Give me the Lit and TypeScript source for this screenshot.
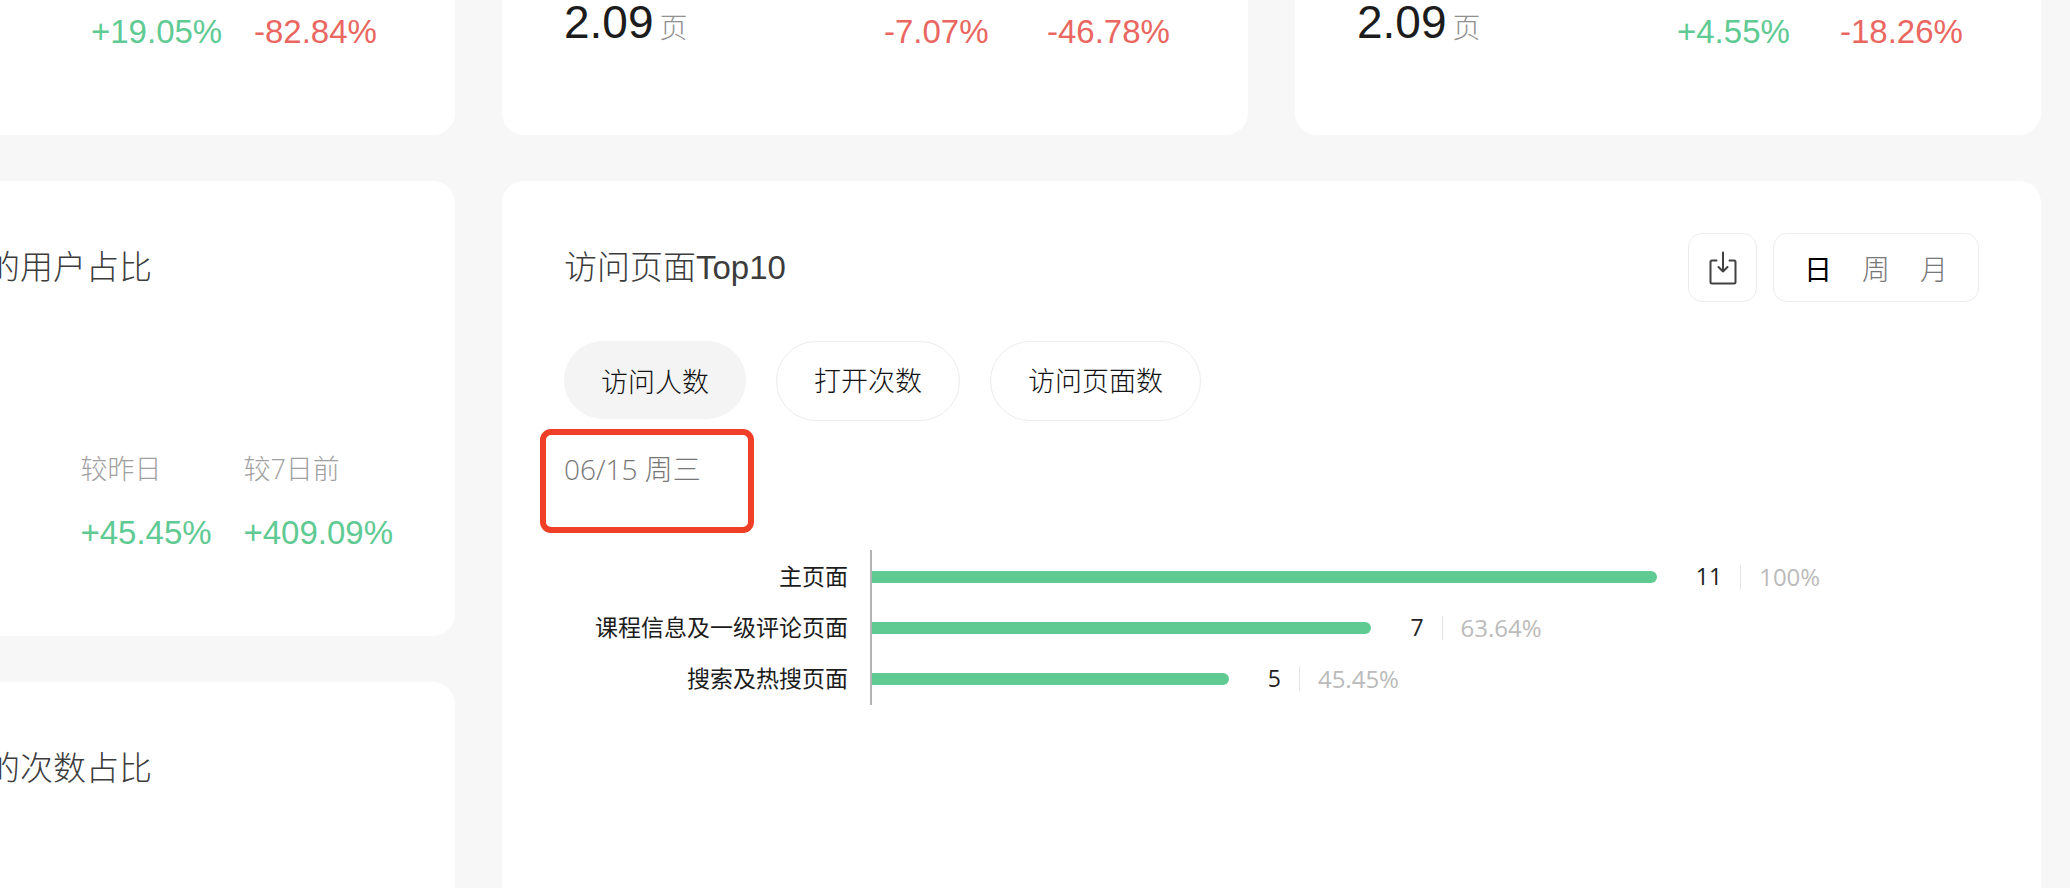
import { LitElement, html, css } from "lit";
import { customElement, property, state } from "lit/decorators.js";
import { classMap } from "lit/directives/class-map.js";

interface PageVisit {
  name: string;
  count: number;
  share: string;
}

const VISITS: PageVisit[] = [
  { name: "主页面", count: 11, share: "100%" },
  { name: "课程信息及一级评论页面", count: 7, share: "63.64%" },
  { name: "搜索及热搜页面", count: 5, share: "45.45%" },
];

/** Percentage of the plot width taken by the longest bar. */
const LONGEST_BAR = 70.9;

/** The two period-over-period rates shown at the right of a metric card. */
@customElement("rate-pair")
export class RatePair extends LitElement {
  @property() day = "";
  @property() week = "";
  @property({ type: Boolean }) labelled = false;

  static styles = css`
    :host {
      display: grid;
      grid-template-columns: 131px minmax(139px, auto);
      column-gap: 32px;
      row-gap: 24px;
      line-height: 40px;
      white-space: nowrap;
    }
    .label {
      font-size: 27px;
      font-weight: 300;
      color: #a0a0a0;
    }
    .rate {
      font-family: "Liberation Sans", Arial, sans-serif;
      font-size: 33px;
    }
    .up {
      color: #60ca93;
    }
    .down {
      color: #ea6660;
    }
  `;

  private rate(value: string) {
    const up = value.startsWith("+");
    return html`<span class=${classMap({ rate: true, up, down: !up })}>${value}</span>`;
  }

  render() {
    return html`
      ${this.labelled
        ? html`<span class="label">较昨日</span><span class="label">较7日前</span>`
        : null}
      ${this.rate(this.day)} ${this.rate(this.week)}
    `;
  }
}

/** Horizontal bar chart of the most visited pages. */
@customElement("visit-chart")
export class VisitChart extends LitElement {
  @property({ attribute: false }) visits: PageVisit[] = [];

  static styles = css`
    :host {
      display: grid;
      grid-template-columns: 284px 1fr;
      column-gap: 22px;
      font-size: 23px;
      line-height: 51px;
      white-space: nowrap;
    }
    .names,
    .plot {
      list-style: none;
      margin: 0;
      padding: 1px 0;
    }
    .names {
      text-align: right;
      color: #1c1c1c;
    }
    .plot {
      border-left: 2px solid #b4b4b4;
    }
    .row {
      display: flex;
      align-items: center;
      height: 51px;
    }
    .bar {
      height: 12px;
      border-radius: 0 6px 6px 0;
      background: #5fcb92;
    }
    .count {
      margin-left: 39px;
      color: #222;
    }
    .divider {
      width: 1px;
      height: 24px;
      margin: 0 18px;
      background: #e4e4e4;
    }
    .share {
      font-size: 24px;
      color: #bbb;
    }
  `;

  render() {
    const max = Math.max(...this.visits.map((v) => v.count));
    return html`
      <ul class="names">
        ${this.visits.map((v) => html`<li>${v.name}</li>`)}
      </ul>
      <ul class="plot">
        ${this.visits.map(
          (v) => html`<li class="row">
            <span class="bar" style="width:${(v.count / max) * LONGEST_BAR}%"></span>
            <span class="count">${v.count}</span>
            <span class="divider"></span>
            <span class="share">${v.share}</span>
          </li>`,
        )}
      </ul>
    `;
  }
}

@customElement("app-root")
export class AppRoot extends LitElement {
  @state() private metric = "访问人数";
  @state() private period = "日";

  static styles = css`
    :host {
      display: block;
      height: 100vh;
      overflow: hidden;
      background: #f7f7f7;
      font-family: "Open Sans", "Noto Sans CJK SC", sans-serif;
    }
    .page {
      display: grid;
      grid-template-columns: 455px 1fr 1fr;
      grid-template-rows: auto auto 1fr;
      gap: 46px 47px;
      height: 100%;
      padding-right: 29px;
      box-sizing: border-box;
    }
    .card {
      background: #fff;
      border-radius: 22px;
      padding: 52px 62px 83px;
      box-sizing: border-box;
      min-width: 0;
    }
    .top {
      display: flex;
      justify-content: space-between;
      align-items: flex-end;
      border-top-left-radius: 0;
      border-top-right-radius: 0;
      padding-top: 0;
    }
    .top rate-pair {
      padding-top: 12px;
    }
    .side {
      display: flex;
      flex-direction: column;
      overflow: hidden;
      border-top-left-radius: 0;
      border-bottom-left-radius: 0;
    }
    .side rate-pair {
      margin-top: 147px;
      align-self: flex-end;
    }
    .first {
      justify-content: flex-end;
      border-bottom-left-radius: 0;
    }
    .open {
      border-bottom-left-radius: 0;
      border-bottom-right-radius: 0;
      padding-bottom: 0;
    }
    .total {
      display: flex;
      align-items: baseline;
      align-self: flex-start;
      gap: 6px;
      font-family: "Liberation Sans", "Noto Sans CJK SC", sans-serif;
      font-size: 46px;
      line-height: 44px;
      color: #1c1c1c;
    }
    .unit {
      font-size: 28px;
      font-weight: 300;
      line-height: 28px;
      color: #909090;
    }
    .title {
      margin: 0;
      font-family: "Liberation Sans", "Noto Sans CJK SC", sans-serif;
      font-size: 33px;
      line-height: 69px;
      font-weight: 300;
      color: #3c3c3c;
      white-space: nowrap;
    }
    .side .title {
      margin-left: -75px;
    }
    .ranking {
      grid-column: 2 / 4;
      grid-row: 2 / 4;
    }
    .head {
      display: flex;
      gap: 16px;
    }
    .head .title {
      flex: 1;
    }
    button {
      font: inherit;
      color: inherit;
      background: none;
      border: 0;
      padding: 0;
      cursor: pointer;
    }
    .download,
    .periods {
      box-sizing: border-box;
      height: 69px;
      border: 1px solid #ededed;
      border-radius: 14px;
    }
    .download {
      display: grid;
      place-items: center;
      width: 69px;
    }
    .periods {
      display: flex;
      padding: 0 15px;
      font-size: 28px;
      font-weight: 300;
      color: #777;
    }
    .period {
      width: 58px;
    }
    .period.on {
      color: #000;
      font-weight: 400;
    }
    .tabs {
      display: flex;
      align-items: flex-start;
      gap: 30px;
      margin-top: 39px;
    }
    .tab {
      box-sizing: border-box;
      height: 80px;
      padding: 0 37px 3px;
      border: 1px solid #ececec;
      border-radius: 40px;
      font-size: 27px;
      font-weight: 300;
      color: #111;
    }
    .tab.on {
      height: 78px;
      padding-bottom: 0;
      border: 0;
      background: #f4f4f4;
    }
    .date {
      position: relative;
      width: max-content;
      margin: 28px 0 61px;
      font-size: 28px;
      line-height: 40px;
      font-weight: 300;
      color: #777;
    }
    .mark {
      position: absolute;
      left: -24px;
      top: -20px;
      width: 214px;
      height: 104px;
      box-sizing: border-box;
      border: 6px solid #ef4027;
      border-radius: 11px;
    }
  `;

  render() {
    return html`
      <main class="page">
        <section class="card top first">
          <rate-pair day="+19.05%" week="-82.84%"></rate-pair>
        </section>
        <section class="card top">
          <div class="total">2.09<span class="unit">页</span></div>
          <rate-pair day="-7.07%" week="-46.78%"></rate-pair>
        </section>
        <section class="card top">
          <div class="total">2.09<span class="unit">页</span></div>
          <rate-pair day="+4.55%" week="-18.26%"></rate-pair>
        </section>

        <section class="card side">
          <h2 class="title">的用户占比</h2>
          <rate-pair labelled day="+45.45%" week="+409.09%"></rate-pair>
        </section>

        <section class="card ranking open">
          <div class="head">
            <h2 class="title">访问页面Top10</h2>
            <button class="download" aria-label="下载">
              <svg width="28" height="34" viewBox="0 0 28 34" fill="none" stroke="#404040" stroke-width="2" stroke-linecap="round" stroke-linejoin="round">
                <path d="M7.5 9.5H3Q1.5 9.5 1.5 11V31Q1.5 32.5 3 32.5H25Q26.5 32.5 26.5 31V11Q26.5 9.5 25 9.5H20.5" />
                <path d="M14 1.5V20.5M9.5 16L14 20.5L18.5 16" />
              </svg>
            </button>
            <div class="periods">
              ${["日", "周", "月"].map(
                (p) => html`<button
                  class=${classMap({ period: true, on: p === this.period })}
                  aria-pressed=${p === this.period}
                  @click=${() => (this.period = p)}
                >${p}</button>`,
              )}
            </div>
          </div>
          <div class="tabs">
            ${["访问人数", "打开次数", "访问页面数"].map(
              (m) => html`<button
                class=${classMap({ tab: true, on: m === this.metric })}
                aria-pressed=${m === this.metric}
                @click=${() => (this.metric = m)}
              >${m}</button>`,
            )}
          </div>
          <div class="date">06/15 周三<span class="mark"></span></div>
          <visit-chart .visits=${VISITS}></visit-chart>
        </section>

        <section class="card side open">
          <h2 class="title">的次数占比</h2>
        </section>
      </main>
    `;
  }
}
